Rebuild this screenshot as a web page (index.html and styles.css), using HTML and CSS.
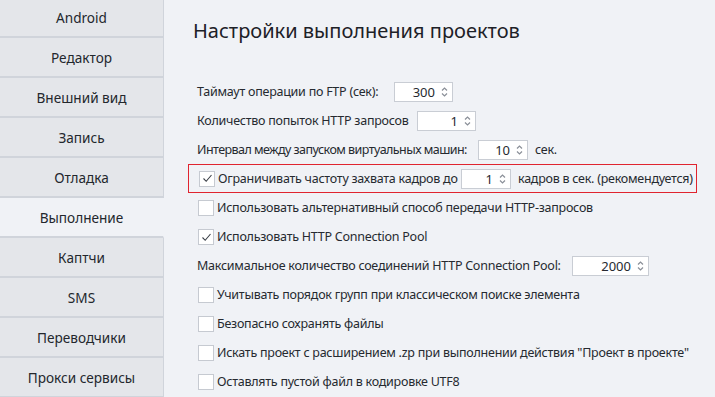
FILE: index.html
```html
<!DOCTYPE html>
<html lang="ru">
<head>
<meta charset="utf-8">
<link rel="stylesheet" href="styles.css">
</head>
<body>
<div class="app">
  <nav class="sidebar">
    <div class="nav-item">Android</div>
    <div class="nav-item">Редактор</div>
    <div class="nav-item">Внешний вид</div>
    <div class="nav-item">Запись</div>
    <div class="nav-item">Отладка</div>
    <div class="nav-item active">Выполнение</div>
    <div class="nav-item">Каптчи</div>
    <div class="nav-item">SMS</div>
    <div class="nav-item">Переводчики</div>
    <div class="nav-item">Прокси сервисы</div>
  </nav>
  <main class="content">
    <h1 class="title">Настройки выполнения проектов</h1>
    <div class="rows">
      <div class="row">
        <span class="label l-ftp">Таймаут операции по FTP (сек):</span>
        <span class="spin w59"><span class="val">300</span><span class="arrows"><svg width="7" height="12" viewBox="0 0 7 12"><path d="M1 4.5L3.5 2L6 4.5M1 7.5L3.5 10L6 7.5" fill="none" stroke="#8a8f98" stroke-width="1.2"/></svg></span></span>
      </div>
      <div class="row">
        <span class="label l-http">Количество попыток HTTP запросов</span>
        <span class="spin w59"><span class="val">1</span><span class="arrows"><svg width="7" height="12" viewBox="0 0 7 12"><path d="M1 4.5L3.5 2L6 4.5M1 7.5L3.5 10L6 7.5" fill="none" stroke="#8a8f98" stroke-width="1.2"/></svg></span></span>
      </div>
      <div class="row">
        <span class="label l-vm">Интервал между запуском виртуальных машин:</span>
        <span class="spin w50"><span class="val">10</span><span class="arrows"><svg width="7" height="12" viewBox="0 0 7 12"><path d="M1 4.5L3.5 2L6 4.5M1 7.5L3.5 10L6 7.5" fill="none" stroke="#8a8f98" stroke-width="1.2"/></svg></span></span>
        <span class="label after">сек.</span>
      </div>
      <div class="row highlight">
        <span class="check on"><svg width="11" height="11" viewBox="0 0 11 11"><path d="M1.5 5.5L4.2 8.3L9.5 2" fill="none" stroke="#3a3f47" stroke-width="1.1"/></svg></span>
        <span class="label l-fps">Ограничивать частоту захвата кадров до</span>
        <span class="spin w50"><span class="val">1</span><span class="arrows"><svg width="7" height="12" viewBox="0 0 7 12"><path d="M1 4.5L3.5 2L6 4.5M1 7.5L3.5 10L6 7.5" fill="none" stroke="#8a8f98" stroke-width="1.2"/></svg></span></span>
        <span class="label after">кадров в сек. (рекомендуется)</span>
      </div>
      <div class="row">
        <span class="check"></span>
        <span class="label">Использовать альтернативный способ передачи HTTP-запросов</span>
      </div>
      <div class="row">
        <span class="check on"><svg width="11" height="11" viewBox="0 0 11 11"><path d="M1.5 5.5L4.2 8.3L9.5 2" fill="none" stroke="#3a3f47" stroke-width="1.1"/></svg></span>
        <span class="label">Использовать HTTP Connection Pool</span>
      </div>
      <div class="row">
        <span class="label l-pool">Максимальное количество соединений HTTP Connection Pool:</span>
        <span class="spin w77"><span class="val">2000</span><span class="arrows"><svg width="7" height="12" viewBox="0 0 7 12"><path d="M1 4.5L3.5 2L6 4.5M1 7.5L3.5 10L6 7.5" fill="none" stroke="#8a8f98" stroke-width="1.2"/></svg></span></span>
      </div>
      <div class="row">
        <span class="check"></span>
        <span class="label">Учитывать порядок групп при классическом поиске элемента</span>
      </div>
      <div class="row">
        <span class="check"></span>
        <span class="label">Безопасно сохранять файлы</span>
      </div>
      <div class="row">
        <span class="check"></span>
        <span class="label">Искать проект с расширением .zp при выполнении действия "Проект в проекте"</span>
      </div>
      <div class="row">
        <span class="check"></span>
        <span class="label">Оставлять пустой файл в кодировке UTF8</span>
      </div>
    </div>
  </main>
</div>
</body>
</html>
```

FILE: styles.css
```css
* { box-sizing: border-box; }
html, body {
  margin: 0;
  padding: 0;
  background: #f0f2f6;
  width: 715px;
  height: 397px;
  overflow: hidden;
}
body {
  font-family: "Noto Sans", "Open Sans", sans-serif;
  color: #262a30;
}
.app {
  display: flex;
  height: 397px;
}
.sidebar {
  width: 164px;
  flex: none;
  display: flex;
  flex-direction: column;
  margin-top: -2px;
}
.nav-item {
  height: 40px;
  flex: none;
  display: flex;
  align-items: center;
  justify-content: center;
  background: #e4e6ea;
  border-bottom: 2px solid #d0d4db;
  border-right: 1px solid #d0d4db;
  font-size: 13.6px;
  color: #23272d;
}
.nav-item.active {
  background: #f0f2f6;
  border-right-color: transparent;
}
.content {
  flex: 1;
  padding-left: 29px;
}
.title {
  margin: 16px 0 0 0;
  font-size: 20px;
  font-weight: normal;
  color: #1d2127;
  line-height: 30px;
}
.rows {
  margin-top: 31px;
  display: flex;
  flex-direction: column;
}
.row {
  height: 29.1px;
  display: flex;
  align-items: center;
  padding-left: 4px;
  font-size: 12.5px;
  letter-spacing: -0.25px;
  white-space: nowrap;
}
.row.highlight {
  margin-left: -5px;
  padding-left: 9px;
  width: 509px;
  border: 1px solid #e0242f;
}
.label { line-height: 16px; flex: none; }
.l-ftp { width: 197px; }
.l-http { width: 220px; }
.l-vm { width: 281px; letter-spacing: -0.55px; }
.l-fps { width: 243px; }
.l-pool { width: 375px; }
.after { margin-left: 7px; }
.spin {
  height: 20px;
  flex: none;
  background: #fff;
  border: 1px solid #c9cdd4;
  display: flex;
  align-items: center;
  justify-content: flex-end;
  padding-right: 4px;
  font-size: 13px;
  letter-spacing: 0;
}
.spin .val { margin-right: 6px; }
.spin .arrows { display: flex; align-items: center; }
.w59 { width: 59px; }
.w50 { width: 50px; }
.w77 { width: 77px; }
.check {
  width: 16px;
  height: 16px;
  background: #fff;
  border: 1px solid #c6cad1;
  display: flex;
  align-items: center;
  justify-content: center;
  flex: none;
  margin-left: 1px;
  margin-right: 3px;
}
```
